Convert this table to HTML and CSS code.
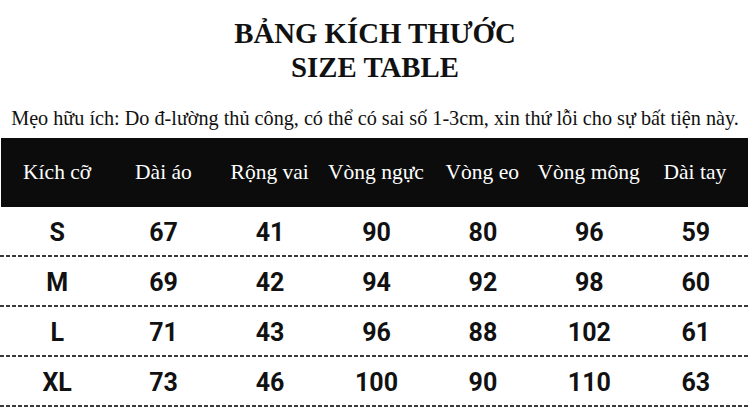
FILE: index.html
```html
<!DOCTYPE html>
<html lang="vi">
<head>
<meta charset="utf-8">
<title>Bảng kích thước</title>
<link rel="stylesheet" href="styles.css">
</head>
<body>
<div class="page">
  <header class="title">
    <h1>BẢNG KÍCH THƯỚC<br>SIZE TABLE</h1>
  </header>
  <p class="tip">Mẹo hữu ích: Do đ-lường thủ công, có thể có sai số 1-3cm, xin thứ lỗi cho sự bất tiện này.</p>
  <div class="table">
    <div class="head">
      <div>Kích cỡ</div><div>Dài áo</div><div>Rộng vai</div><div>Vòng ngực</div><div>Vòng eo</div><div>Vòng mông</div><div>Dài tay</div>
    </div>
    <div class="row"><div>S</div><div>67</div><div>41</div><div>90</div><div>80</div><div>96</div><div>59</div></div>
    <div class="row"><div>M</div><div>69</div><div>42</div><div>94</div><div>92</div><div>98</div><div>60</div></div>
    <div class="row"><div>L</div><div>71</div><div>43</div><div>96</div><div>88</div><div>102</div><div>61</div></div>
    <div class="row"><div>XL</div><div>73</div><div>46</div><div>100</div><div>90</div><div>110</div><div>63</div></div>
  </div>
</div>
</body>
</html>
```

FILE: styles.css
```css
html, body {
  margin: 0;
  padding: 0;
  background: #ffffff;
}
.page {
  width: 750px;
  height: 409px;
  overflow: hidden;
  color: #111111;
}
.title {
  padding-top: 16px;
  text-align: center;
}
.title h1 {
  margin: 0;
  font-family: "Liberation Serif", serif;
  font-weight: 700;
  font-size: 28.8px;
  line-height: 34px;
  color: #111111;
}
.tip {
  margin: 23px 0 9px 0;
  text-align: center;
  font-family: "Liberation Serif", serif;
  font-size: 20.2px;
  line-height: 22px;
  white-space: nowrap;
}
.table {
  display: flex;
  flex-direction: column;
}
.head {
  margin-left: 1px;
  width: 747px;
  height: 69px;
  box-sizing: border-box;
  padding-left: 3px;
  background: #0c0c0c;
  color: #ffffff;
  display: grid;
  grid-template-columns: repeat(7, 1fr);
  align-items: center;
  font-family: "Liberation Serif", serif;
  font-size: 21.5px;
}
.head > div, .row > div {
  text-align: center;
  white-space: nowrap;
}
.row {
  height: 50px;
  box-sizing: border-box;
  padding-left: 4px;
  width: 749px;
  display: grid;
  grid-template-columns: repeat(7, 1fr);
  align-items: center;
  font-family: Roboto, sans-serif;
  font-weight: 700;
  font-size: 25px;
  color: #111111;
  background-image: repeating-linear-gradient(to right, #3a3a3a 0 4px, transparent 4px 6px);
  background-size: 100% 2px;
  background-repeat: no-repeat;
  background-position: left bottom;
}
```
